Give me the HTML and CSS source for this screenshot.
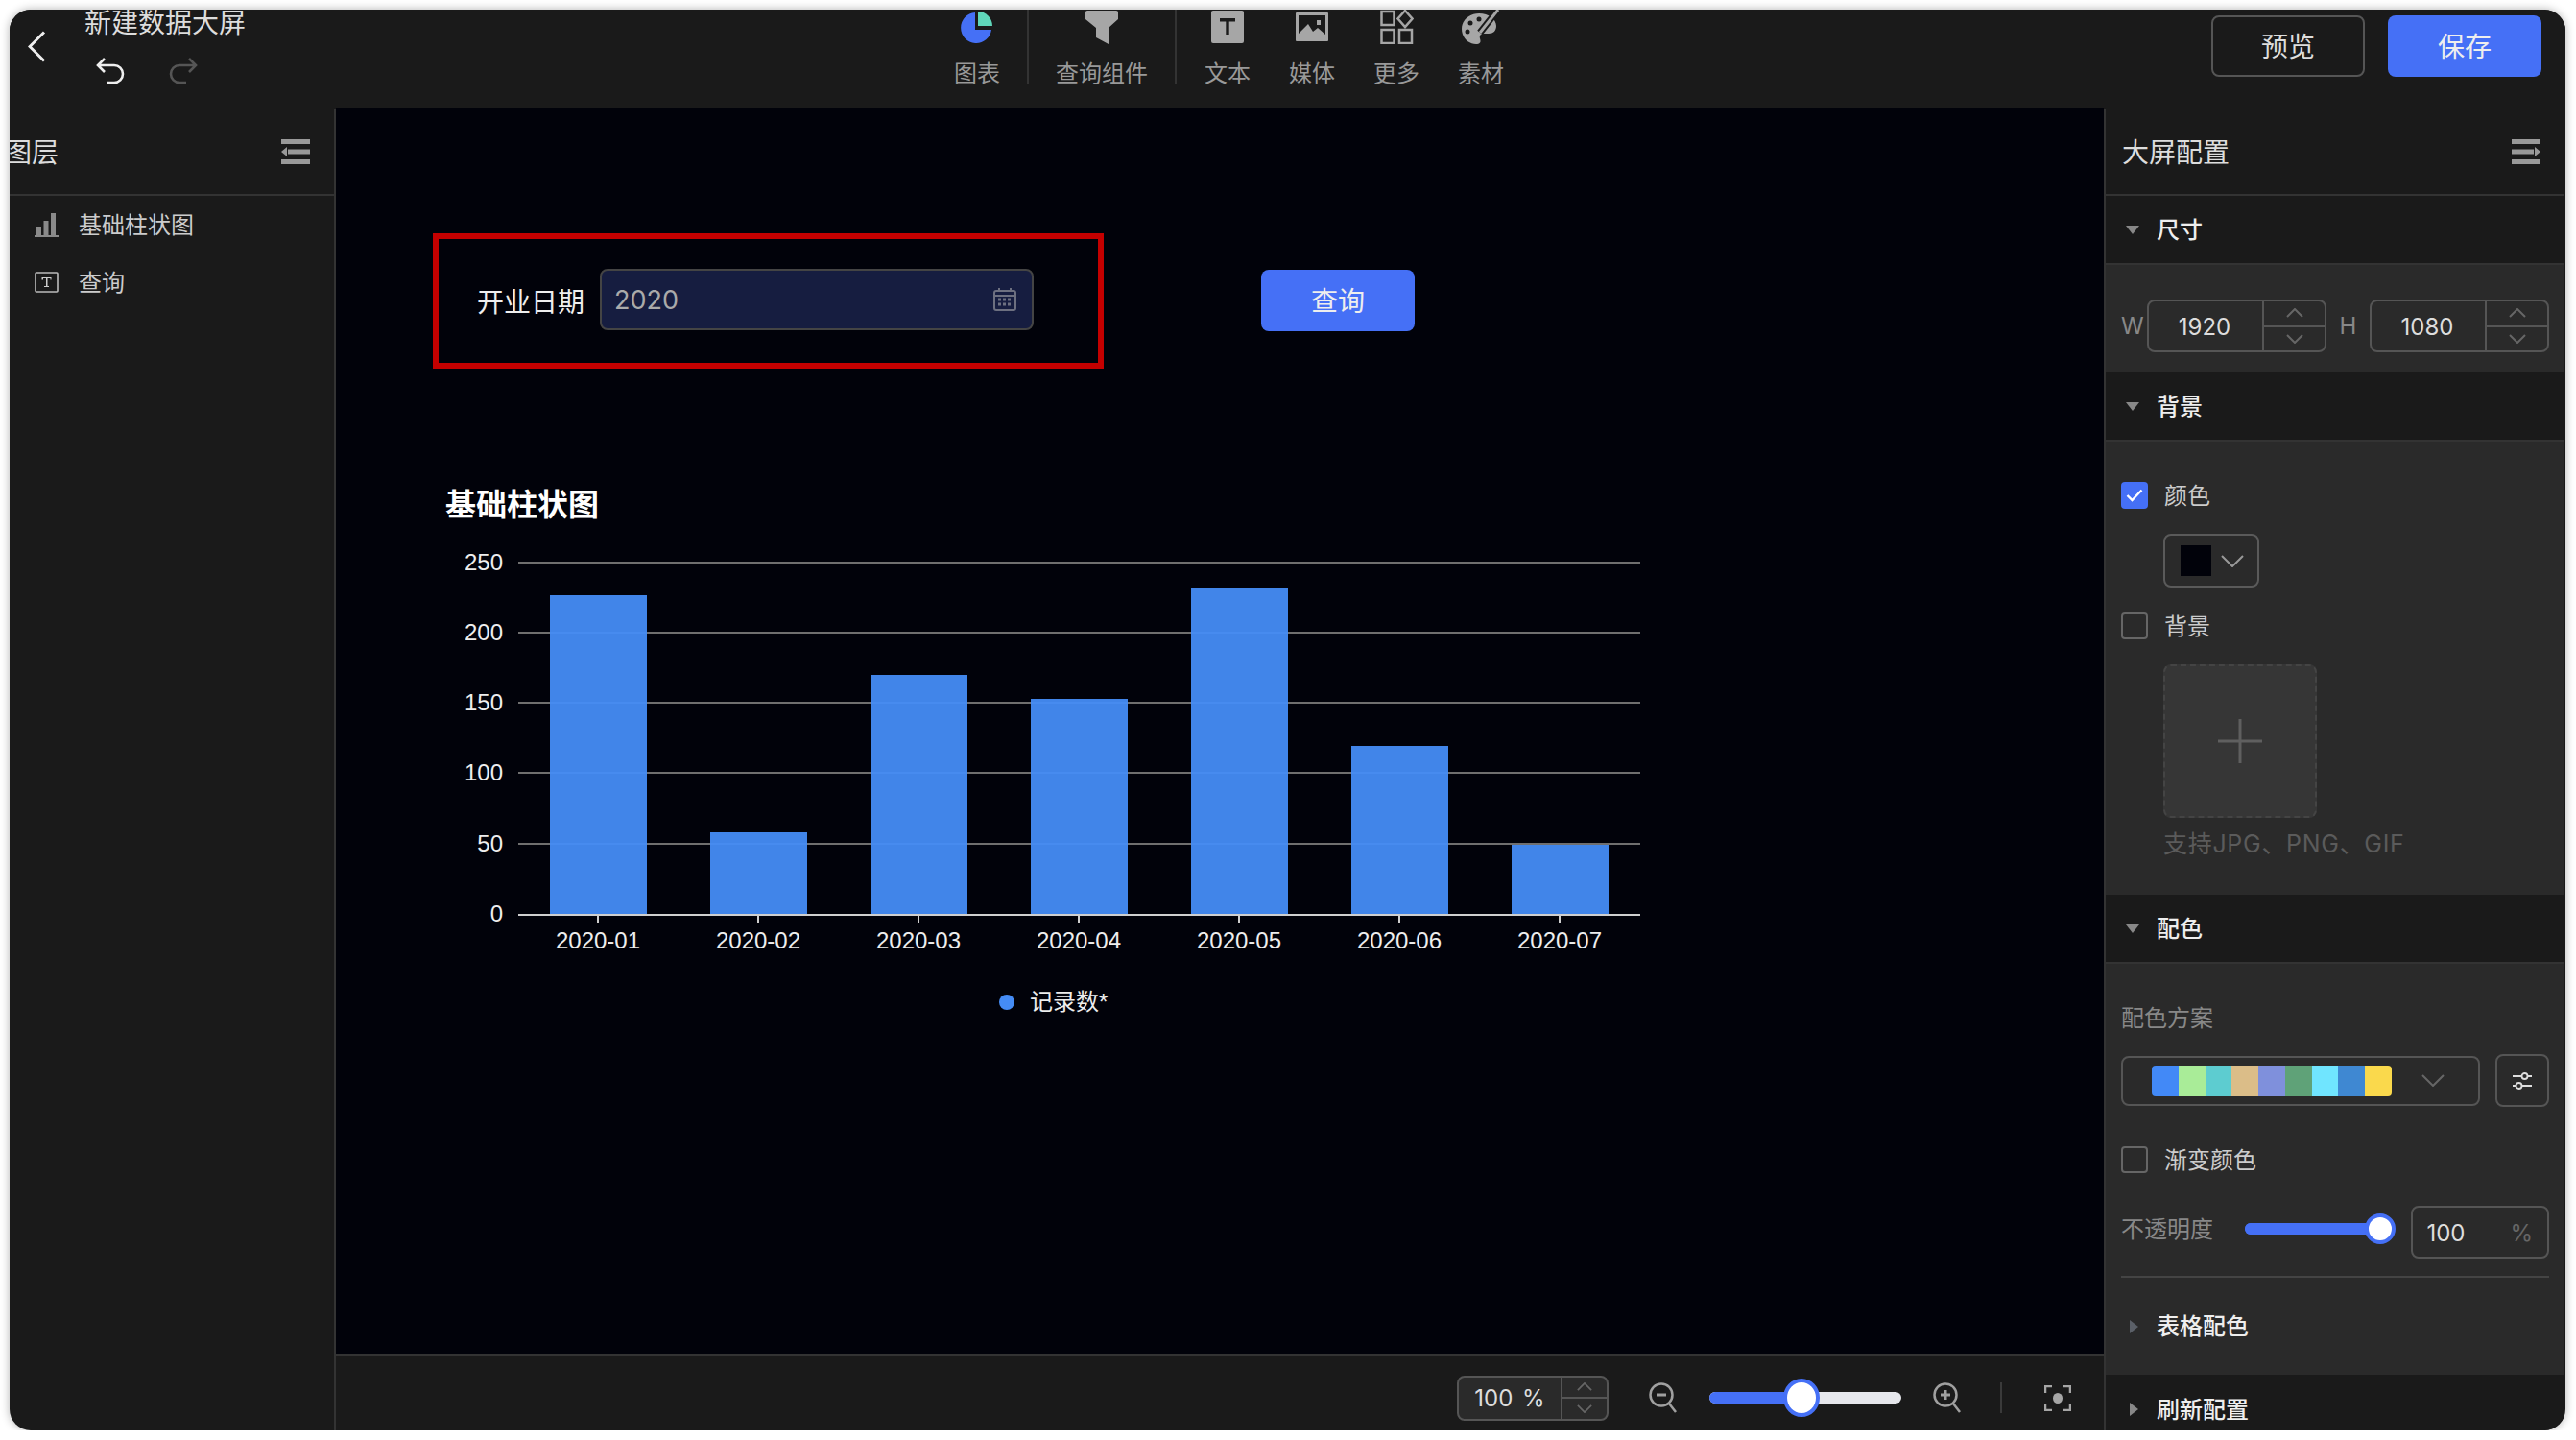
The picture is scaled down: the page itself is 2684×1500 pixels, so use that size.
FILE: index.html
```html
<!DOCTYPE html>
<html lang="zh-CN">
<head>
  <meta charset="UTF-8" />
  <title>新建数据大屏</title>
  <link rel="stylesheet" href="styles.css">
</head>
<body>
  <svg class="sprite" width="0" height="0">
    <symbol id="chev-up" viewBox="0 0 18 10"><path d="M1 9 9 1l8 8" fill="none" stroke="currentColor" stroke-width="2"/></symbol>
    <symbol id="chev-down" viewBox="0 0 18 10"><path d="M1 1l8 8 8-8" fill="none" stroke="currentColor" stroke-width="2"/></symbol>
    <symbol id="tri-down" viewBox="0 0 14 9"><path d="M0 0h14L7 9z" fill="currentColor"/></symbol>
    <symbol id="tri-right" viewBox="0 0 9 14"><path d="M0 0v14l9-7z" fill="currentColor"/></symbol>
  </svg>

  <div class="window">
    <header class="topbar">
      <div class="top-left">
        <svg class="back" width="19" height="33" viewBox="0 0 19 33"><path d="M17 1.5 2 16.500 17 31.500" fill="none" stroke="#eee" stroke-width="3"/></svg>
        <div class="doc">
          <div class="doc-title">新建数据大屏</div>
          <div class="history">
            <svg width="30" height="28" viewBox="0 0 30 28"><path d="M9 1 2 8l7 7M2 8h17a9 9 0 0 1 0 18h-7" fill="none" stroke="#eee" stroke-width="2.600"/></svg>
            <svg width="30" height="28" viewBox="0 0 30 28"><path d="M21 1l7 7-7 7M28 8H11a9 9 0 0 0 0 18h7" fill="none" stroke="#555" stroke-width="2.600"/></svg>
          </div>
        </div>
      </div>

      <nav class="toolbar">
        <div class="tool tool-first">
          <div class="tool-icon">
            <svg width="34" height="34" viewBox="0 0 34 34"><path d="M15 2a16 16 0 1 0 17 18H15z" fill="#4570f6"/><path d="M18 1a15 15 0 0 1 15 15H18z" fill="#5fd6b9"/></svg>
          </div>
          <span>图表</span>
        </div>
        <i class="tool-sep sep-a"></i>
        <div class="tool tool-wide">
          <div class="tool-icon">
            <svg width="34" height="36" viewBox="0 0 34 36"><path d="M0 3q0-2 2-2h30q2 0 2 2v7L24 19v17l-13-7V19L0 10z" fill="#a6a6a6"/></svg>
          </div>
          <span>查询组件</span>
        </div>
        <i class="tool-sep sep-b"></i>
        <div class="tool">
          <div class="tool-icon">
            <svg width="34" height="34" viewBox="0 0 34 34"><rect width="34" height="34" rx="2" fill="#a6a6a6"/><path d="M9 8h16v3.500h-6.300V25h-3.400V11.500H9z" fill="#1a1a1a"/></svg>
          </div>
          <span>文本</span>
        </div>
        <div class="tool tool-next">
          <div class="tool-icon">
            <svg width="34" height="30" viewBox="0 0 34 30"><rect width="34" height="30" rx="1" fill="#a6a6a6"/><path d="M3 3h28v20l-8-7-5 4-5-8-10 10z" fill="#1a1a1a"/><rect x="22" y="8" width="4" height="5" fill="#a6a6a6"/></svg>
          </div>
          <span>媒体</span>
        </div>
        <div class="tool tool-next">
          <div class="tool-icon">
            <svg width="35" height="36" viewBox="0 0 35 36" fill="none" stroke="#a6a6a6" stroke-width="2.500"><rect x="1.500" y="2" width="13" height="14"/><path d="M26 1l7.500 8.500L26 18l-7.500-8.500z"/><rect x="1.500" y="21" width="13" height="14"/><rect x="20" y="21" width="13" height="14"/></svg>
          </div>
          <span>更多</span>
        </div>
        <div class="tool tool-next">
          <div class="tool-icon">
            <svg width="40" height="36" viewBox="0 0 40 36"><path d="M18 4C8 4 0 11 0 20c0 9 7 16 15 16 5 0 5-3 4-6-1-3 1-5 4-5h5c5 0 8-3 8-8 0-7-8-13-18-13z" fill="#a6a6a6"/><circle cx="9" cy="14" r="2.500" fill="#1a1a1a"/><circle cx="18" cy="10" r="2.500" fill="#1a1a1a"/><circle cx="6" cy="23" r="2.500" fill="#1a1a1a"/><path d="M38 0 19 24" stroke="#1a1a1a" stroke-width="7"/><path d="M38 0 19 24" stroke="#a6a6a6" stroke-width="3"/></svg>
          </div>
          <span>素材</span>
        </div>
      </nav>

      <div class="top-actions">
        <button class="btn btn-ghost">预览</button>
        <button class="btn btn-primary">保存</button>
      </div>
    </header>

    <div class="workspace">
      <aside class="layers">
        <div class="panel-head layers-head">
          <span class="layers-title">图层</span>
          <svg width="30" height="26" viewBox="0 0 30 26" fill="#999"><rect width="30" height="5"/><rect x="7" y="10.500" width="23" height="5"/><path d="M6 8v10l-6-5z"/><rect y="21" width="30" height="5"/></svg>
        </div>
        <div class="layer-item">
          <svg width="25" height="25" viewBox="0 0 25 25" fill="#8a8a8a"><rect x="2" y="14" width="5" height="9"/><rect x="9.500" y="8" width="5" height="15"/><rect x="17" y="0" width="5" height="23"/><rect y="23" width="25" height="2"/></svg>
          <span>基础柱状图</span>
        </div>
        <div class="layer-item">
          <svg width="25" height="22" viewBox="0 0 25 22"><rect x="1" y="1" width="23" height="20" rx="1" fill="none" stroke="#bbb" stroke-width="1.600"/><path d="M7.500 6h10v2.500h-1V7h-3v8h1.500v1h-5v-1H12V7H9v1.500H7.500z" fill="#ccc"/></svg>
          <span>查询</span>
        </div>
      </aside>

      <main class="center">
        <div class="stage">
          <div class="filter-box">
            <span class="filter-label">开业日期</span>
            <div class="date-input">
              <span>2020</span>
              <svg width="24" height="24" viewBox="0 0 24 24" fill="none" stroke="#6d7080" stroke-width="2"><rect x="1" y="3" width="22" height="20" rx="2"/><path d="M1 8h22M6 0v4M18 0v4"/><path d="M5 12h14M5 17h14" stroke-width="3" stroke-dasharray="3 2"/></svg>
            </div>
          </div>
          <button class="query-btn">查询</button>

          <svg class="chart" width="1300" height="600" viewBox="450 492 1300 600">
            <text class="chart-title" x="464" y="537">基础柱状图</text>

            <g stroke="#6f6f6f" stroke-width="2">
              <path d="M540 586H1709"/>
              <path d="M540 659H1709"/>
              <path d="M540 732H1709"/>
              <path d="M540 805H1709"/>
              <path d="M540 879H1709"/>
            </g>

            <g class="bar">
              <rect x="573" y="620" width="101" height="332"/>
              <rect x="740" y="867" width="101" height="85"/>
              <rect x="907" y="703" width="101" height="249"/>
              <rect x="1074" y="728" width="101" height="224"/>
              <rect x="1241" y="613" width="101" height="339"/>
              <rect x="1408" y="777" width="101" height="175"/>
              <rect x="1575" y="880" width="101" height="72"/>
            </g>

            <path d="M540 953H1709" stroke="#cfcfcf" stroke-width="2"/>
            <g stroke="#cfcfcf" stroke-width="2">
              <path d="M623 953v8"/><path d="M790 953v8"/><path d="M957 953v8"/><path d="M1124 953v8"/><path d="M1291 953v8"/><path d="M1458 953v8"/><path d="M1625 953v8"/>
            </g>

            <g class="axis-y">
              <text x="524" y="594">250</text>
              <text x="524" y="667">200</text>
              <text x="524" y="740">150</text>
              <text x="524" y="813">100</text>
              <text x="524" y="887">50</text>
              <text x="524" y="960">0</text>
            </g>
            <g class="axis-x">
              <text x="623" y="988">2020-01</text>
              <text x="790" y="988">2020-02</text>
              <text x="957" y="988">2020-03</text>
              <text x="1124" y="988">2020-04</text>
              <text x="1291" y="988">2020-05</text>
              <text x="1458" y="988">2020-06</text>
              <text x="1625" y="988">2020-07</text>
            </g>

            <circle cx="1049" cy="1044" r="8" fill="#458cf5"/>
            <text class="legend" x="1073" y="1052">记录数*</text>
          </svg>
        </div>

        <footer class="zoombar">
          <div class="num num-zoom">
            <div class="num-val">100 %</div>
            <div class="num-steps">
              <div class="step"><svg width="16" height="9"><use href="#chev-up"/></svg></div>
              <div class="step"><svg width="16" height="9"><use href="#chev-down"/></svg></div>
            </div>
          </div>
          <svg class="zoom-out" width="30" height="32" viewBox="0 0 30 32" fill="none" stroke="#a0a0a0" stroke-width="2.500"><circle cx="13" cy="13" r="11.500"/><path d="M21 22l7 9"/><path d="M8 13h10" stroke-width="3"/></svg>
          <div class="slider slider-zoom">
            <div class="slider-fill"></div>
            <div class="slider-thumb"></div>
          </div>
          <svg class="zoom-in" width="30" height="32" viewBox="0 0 30 32" fill="none" stroke="#a0a0a0" stroke-width="2.500"><circle cx="13" cy="13" r="11.500"/><path d="M21 22l7 9"/><path d="M8 13h10M13 8v10" stroke-width="3"/></svg>
          <i class="zoom-sep"></i>
          <svg class="focus" width="28" height="27" viewBox="0 0 28 27" fill="none" stroke="#a6a6a6" stroke-width="2.500"><path d="M1 8V1h7M20 1h7v7M27 19v7h-7M8 26H1v-7"/><ellipse cx="14" cy="13.500" rx="5" ry="5.500" fill="#a6a6a6" stroke="none"/></svg>
        </footer>
      </main>

      <aside class="config">
        <div class="panel-head">
          <span class="config-title">大屏配置</span>
          <svg width="30" height="26" viewBox="0 0 30 26" fill="#999"><rect width="30" height="5"/><rect y="10.500" width="23" height="5"/><path d="M24 8v10l6-5z"/><rect y="21" width="30" height="5"/></svg>
        </div>

        <div class="sec-head">
          <svg class="tri-d" width="14" height="9"><use href="#tri-down"/></svg>
          <span>尺寸</span>
        </div>
        <div class="sec-body size-body">
          <span class="dim dim-w">W</span>
          <div class="num num-size">
            <div class="num-val">1920</div>
            <div class="num-steps">
              <div class="step"><svg width="18" height="10"><use href="#chev-up"/></svg></div>
              <div class="step"><svg width="18" height="10"><use href="#chev-down"/></svg></div>
            </div>
          </div>
          <span class="dim dim-h">H</span>
          <div class="num num-size">
            <div class="num-val">1080</div>
            <div class="num-steps">
              <div class="step"><svg width="18" height="10"><use href="#chev-up"/></svg></div>
              <div class="step"><svg width="18" height="10"><use href="#chev-down"/></svg></div>
            </div>
          </div>
        </div>

        <div class="sec-head">
          <svg class="tri-d" width="14" height="9"><use href="#tri-down"/></svg>
          <span>背景</span>
        </div>
        <div class="sec-body bg-body">
          <div class="check-row">
            <span class="check check-on">
              <svg width="18" height="14" viewBox="0 0 18 14"><path d="M1.500 7l5 5L16.500 1.500" fill="none" stroke="#fff" stroke-width="2.400"/></svg>
            </span>
            <span class="check-text">颜色</span>
          </div>
          <div class="color-select">
            <span class="color-swatch"></span>
            <svg width="24" height="13" viewBox="0 0 24 13"><path d="M1 1l11 11L23 1" fill="none" stroke="#999" stroke-width="2"/></svg>
          </div>
          <div class="check-row check-row-2">
            <span class="check"></span>
            <span class="check-text">背景</span>
          </div>
          <div class="upload">
            <svg width="46" height="46" viewBox="0 0 46 46"><path d="M0 23h46M23 0v46" stroke="#5f5f5f" stroke-width="3"/></svg>
          </div>
          <div class="upload-hint">支持JPG、PNG、GIF</div>
        </div>

        <div class="sec-head">
          <svg class="tri-d" width="14" height="9"><use href="#tri-down"/></svg>
          <span>配色</span>
        </div>
        <div class="sec-body palette-body">
          <div class="field-label">配色方案</div>
          <div class="scheme-row">
            <div class="scheme-select">
              <div class="scheme-strip">
                <i class="c1"></i><i class="c2"></i><i class="c3"></i><i class="c4"></i><i class="c5"></i><i class="c6"></i><i class="c7"></i><i class="c8"></i><i class="c9"></i>
              </div>
              <svg width="24" height="13" viewBox="0 0 24 13"><path d="M1 1l11 11L23 1" fill="none" stroke="#666" stroke-width="2"/></svg>
            </div>
            <div class="scheme-btn">
              <svg width="20" height="20" viewBox="0 0 20 20" fill="none" stroke="#ddd" stroke-width="1.800"><path d="M0 5h9M16 5h4M0 15h3M10 15h10"/><circle cx="12.500" cy="5" r="3"/><circle cx="6.500" cy="15" r="3"/></svg>
            </div>
          </div>
          <div class="check-row check-row-3">
            <span class="check"></span>
            <span class="check-text">渐变颜色</span>
          </div>
          <div class="opacity-row">
            <span class="field-label">不透明度</span>
            <div class="slider slider-op">
              <div class="slider-fill"></div>
              <div class="slider-thumb"></div>
            </div>
            <div class="op-input">
              <span>100</span>
              <span class="op-unit">%</span>
            </div>
          </div>
          <div class="rule"></div>
          <div class="sub-head">
            <svg class="tri-dim" width="9" height="14"><use href="#tri-right"/></svg>
            <span>表格配色</span>
          </div>
        </div>

        <div class="sec-head sec-last">
          <svg class="tri-r" width="9" height="14"><use href="#tri-right"/></svg>
          <span>刷新配置</span>
        </div>
      </aside>
    </div>
  </div>
</body>
</html>
```

FILE: styles.css
```css
* {
  box-sizing: border-box;
}

body {
  margin: 0;
  background: #fff;
  font-family: Inter, "Noto Sans CJK SC", sans-serif;
  font-size: 24px;
  color: #ddd;
}

.sprite {
  position: absolute;
}

.window {
  width: 2663px;
  height: 1480px;
  margin: 10px 0 0 10px;
  display: flex;
  flex-direction: column;
  background: #1a1a1a;
  border-radius: 22px;
  overflow: hidden;
  box-shadow: 0 0 10px rgba(0, 0, 0, 0.3);
}

/* top bar */
.topbar {
  height: 102px;
  flex: none;
  display: flex;
  align-items: flex-start;
  background: #1a1a1a;
}

.top-left {
  width: 976px;
  flex: none;
  display: flex;
  align-items: flex-start;
}

.back {
  margin: 22px 0 0 19px;
}

.doc {
  margin-left: 40px;
}

.doc-title {
  font-size: 28px;
  line-height: 28px;
  color: #ddd;
}

.history {
  display: flex;
  gap: 46px;
  margin: 22px 0 0 12px;
}

.toolbar {
  display: flex;
  align-items: flex-start;
}

.tool {
  width: 64px;
  display: flex;
  flex-direction: column;
  align-items: center;
  color: #999;
}

.tool-wide {
  width: 96px;
}

.tool-next {
  margin-left: 24px;
}

.tool-icon {
  height: 36px;
  display: flex;
  align-items: center;
  justify-content: center;
}

.tool span {
  margin-top: 16px;
  line-height: 30px;
  white-space: nowrap;
}

.tool-sep {
  width: 2px;
  height: 78px;
  background: #333;
}

.sep-a {
  margin: 0 28px 0 20px;
}

.sep-b {
  margin: 0 21px 0 28px;
}

.top-actions {
  margin: 6px 0 0 auto;
  padding-right: 25px;
  display: flex;
  gap: 24px;
}

.btn {
  width: 160px;
  height: 64px;
  padding: 0 0 3px;
  border-radius: 8px;
  font: inherit;
  font-size: 28px;
}

.btn-ghost {
  background: transparent;
  border: 2px solid #555;
  color: #ddd;
}

.btn-primary {
  background: #4570f6;
  border: none;
  color: #eee;
}

/* main area */
.workspace {
  flex: 1;
  display: flex;
  min-height: 0;
}

.panel-head {
  height: 90px;
  flex: none;
  display: flex;
  align-items: center;
  justify-content: space-between;
  padding-right: 25px;
  border-bottom: 2px solid #333;
}

.layers {
  width: 340px;
  flex: none;
  margin-top: 2px;
  overflow: hidden;
  border-right: 2px solid #333;
}

.layers-title {
  font-size: 28px;
  margin: 0 0 3px -5px;
  color: #ddd;
}

.layer-item {
  height: 30px;
  display: flex;
  align-items: center;
  gap: 21px;
  margin: 15px 0 30px 26px;
  color: #ccc;
}

.layer-item span {
  margin-bottom: 4px;
}

.layer-item + .layer-item {
  margin-top: 0;
}

.center {
  flex: 1;
  min-width: 0;
  display: flex;
  flex-direction: column;
}

/* free canvas, items sit where they were dropped */
.stage {
  flex: 1;
  position: relative;
  background: #01020a;
}

.filter-box {
  position: absolute;
  left: 101px;
  top: 131px;
  width: 699px;
  height: 141px;
  padding: 0 0 3px 40px;
  border: 6px solid #c40000;
  display: flex;
  align-items: center;
}

.filter-label {
  font-size: 28px;
  color: #eee;
  margin-top: 1px;
}

.date-input {
  width: 452px;
  height: 64px;
  margin-left: 16px;
  padding: 0 16px 0 13px;
  display: flex;
  align-items: center;
  justify-content: space-between;
  background: #161d40;
  border: 2px solid #444;
  border-radius: 8px;
  font-size: 27px;
  color: #aaa;
}

.query-btn {
  position: absolute;
  left: 964px;
  top: 169px;
  width: 160px;
  height: 64px;
  padding: 0 0 3px;
  background: #4570f6;
  border: none;
  border-radius: 8px;
  font: inherit;
  font-size: 28px;
  color: #eee;
}

.chart {
  position: absolute;
  left: 100px;
  top: 380px;
}

.chart text {
  font-family: "Liberation Sans", "Noto Sans CJK SC", sans-serif;
  font-size: 24px;
  fill: #eee;
}

.chart .chart-title {
  font-size: 32px;
  font-weight: 700;
  fill: #fff;
}

.bar rect {
  fill: #458cf5;
  fill-opacity: 0.95;
}

.axis-y text {
  text-anchor: end;
}

.axis-x text {
  text-anchor: middle;
}

.zoombar {
  height: 80px;
  flex: none;
  display: flex;
  align-items: center;
  justify-content: flex-end;
  padding: 10px 34px 0 0;
  border-top: 2px solid #333;
}

.num {
  display: flex;
  border: 2px solid #555;
  border-radius: 8px;
  color: #ddd;
}

.num-val {
  flex: 1;
  display: flex;
  align-items: center;
  justify-content: center;
}

.num-steps {
  display: flex;
  flex-direction: column;
  border-left: 2px solid #555;
}

.step {
  flex: 1;
  display: flex;
  align-items: center;
  justify-content: center;
  color: #666;
}

.step + .step {
  border-top: 2px solid #555;
}

.num-zoom {
  width: 158px;
  height: 47px;
  background: #2a2a2a;
}

.num-zoom .num-val {
  word-spacing: 3px;
}

.num-zoom .num-steps {
  width: 48px;
}

.zoom-out {
  margin-left: 42px;
}

.slider {
  position: relative;
  height: 12px;
  border-radius: 6px;
}

.slider-fill {
  height: 100%;
  background: #4570f6;
  border-radius: 6px;
}

.slider-thumb {
  position: absolute;
  top: 50%;
  width: 36px;
  height: 36px;
  margin: -18px 0 0 -18px;
  background: #fff;
  border: 4px solid #4570f6;
  border-radius: 50%;
}

.slider-zoom {
  width: 200px;
  margin-left: 33px;
  background: #e6e7ec;
}

.slider-zoom .slider-fill {
  width: 48%;
}

.slider-zoom .slider-thumb {
  left: 48%;
  width: 38px;
  height: 40px;
  margin: -20px 0 0 -19px;
}

.zoom-in {
  margin-left: 33px;
}

.zoom-sep {
  width: 2px;
  height: 32px;
  margin-left: 40px;
  background: #3a3a3a;
}

.focus {
  margin-left: 44px;
}

/* right config panel */
.config {
  width: 480px;
  flex: none;
  margin-top: 2px;
  margin-right: 1px;
  overflow: hidden;
  border-left: 2px solid #333;
}

.config .panel-head {
  padding: 0 25px 0 17px;
}

.config-title {
  font-size: 28px;
  color: #ddd;
  margin-bottom: 3px;
}

.sec-head {
  height: 72px;
  flex: none;
  display: flex;
  align-items: center;
  padding-left: 21px;
  border-bottom: 2px solid #333;
  font-weight: 500;
  color: #eee;
  background: #1a1a1a;
}

.sec-head span {
  margin: 0 0 4px 18px;
}

.tri-d {
  color: #888;
}

.tri-r {
  color: #888;
  margin-left: 4px;
}

.sec-head .tri-r + span {
  margin-left: 19px;
}

.tri-dim {
  color: #5b6068;
}

.sec-last {
  border-bottom: none;
}

.sec-body {
  background: #2a2a2a;
  padding: 0 16px;
}

.size-body {
  height: 112px;
  display: flex;
  align-items: flex-start;
  padding-top: 36px;
}

.dim {
  line-height: 55px;
  color: #888;
}

.dim-w {
  width: 27px;
}

.dim-h {
  width: 45px;
  text-align: center;
}

.num-size {
  width: 187px;
  height: 55px;
}

.num-size .num-val {
  padding: 2px 2px 0 0;
}

.num-size .num-steps {
  width: 65px;
}

.bg-body {
  height: 472px;
  padding-top: 42px;
}

.check-row {
  display: flex;
  align-items: center;
  height: 28px;
  gap: 17px;
  color: #ccc;
}

.check-text {
  margin-bottom: 3px;
}

.check {
  width: 28px;
  height: 28px;
  display: flex;
  align-items: center;
  justify-content: center;
  border: 2px solid #666;
  border-radius: 4px;
}

.check-on {
  background: #4570f6;
  border: none;
}

.color-select {
  width: 100px;
  height: 56px;
  margin: 26px 0 0 44px;
  padding-left: 16px;
  display: flex;
  align-items: center;
  gap: 10px;
  border: 2px solid #5a5a5a;
  border-radius: 8px;
}

.color-swatch {
  width: 32px;
  height: 32px;
  background: #01020a;
}

.check-row-2 {
  margin-top: 26px;
}

.upload {
  width: 160px;
  height: 160px;
  margin: 26px 0 0 44px;
  display: flex;
  align-items: center;
  justify-content: center;
  background: #363636;
  border: 2px dashed #444;
  border-radius: 8px;
}

.upload-hint {
  margin: 12px 0 0 44px;
  font-size: 25px;
  line-height: 30px;
  letter-spacing: 0.7px;
  color: #5b5b5b;
  white-space: nowrap;
}

.palette-body {
  height: 428px;
  padding-top: 42px;
}

.field-label {
  line-height: 30px;
  color: #888;
  white-space: nowrap;
}

.scheme-row {
  display: flex;
  align-items: center;
  justify-content: space-between;
  margin-top: 22px;
}

.scheme-select {
  width: 374px;
  height: 52px;
  padding: 0 35px 0 30px;
  display: flex;
  align-items: center;
  justify-content: space-between;
  border: 2px solid #555;
  border-radius: 8px;
}

.scheme-strip {
  width: 250px;
  height: 32px;
  display: flex;
  border-radius: 4px;
  overflow: hidden;
}

.scheme-strip i {
  flex: 1;
}

.c1 { background: #4289f7; }
.c2 { background: #a9ec98; }
.c3 { background: #5dccd0; }
.c4 { background: #dbbd88; }
.c5 { background: #7f90dc; }
.c6 { background: #5fa278; }
.c7 { background: #70e5ff; }
.c8 { background: #3f88d2; }
.c9 { background: #fad94c; }

.scheme-btn {
  width: 56px;
  height: 55px;
  display: flex;
  align-items: center;
  justify-content: center;
  border: 2px solid #555;
  border-radius: 8px;
}

.check-row-3 {
  margin-top: 41px;
}

.opacity-row {
  display: flex;
  align-items: flex-start;
  margin-top: 34px;
}

.opacity-row .field-label {
  margin-top: 10px;
}

.slider-op {
  width: 142px;
  margin: 18px 0 0 33px;
  background: #4570f6;
}

.slider-op .slider-thumb {
  left: 100%;
  width: 32px;
  height: 32px;
  margin: -16px 0 0 -16px;
}

.op-input {
  width: 144px;
  height: 55px;
  margin-left: 32px;
  padding: 2px 15px 0 14px;
  display: flex;
  align-items: center;
  justify-content: space-between;
  border: 2px solid #555;
  border-radius: 8px;
}

.op-unit {
  color: #666;
}

.rule {
  height: 2px;
  margin-top: 18px;
  background: #444;
}

.sub-head {
  height: 101px;
  display: flex;
  align-items: center;
  padding-left: 9px;
  font-weight: 500;
  color: #eee;
}

.sub-head span {
  margin: 0 0 4px 19px;
}
```
